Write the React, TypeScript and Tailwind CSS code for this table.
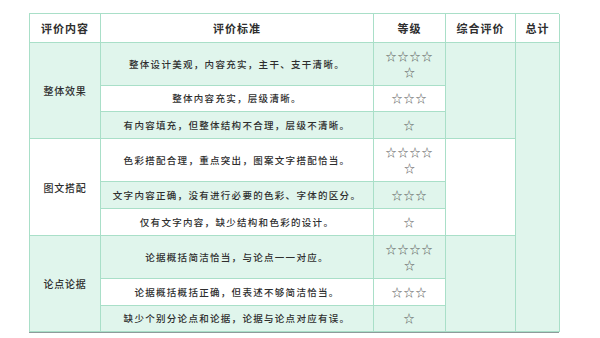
import React from "react";

const font = { fontFamily: '"Noto Sans CJK SC", "Noto Sans", sans-serif' };

type Row = { text: string; stars: number; green: boolean };
type Group = { name: string; green: boolean; rows: Row[] };

const groups: Group[] = [
  {
    name: "整体效果",
    green: true,
    rows: [
      { text: "整体设计美观，内容充实，主干、支干清晰。", stars: 5, green: true },
      { text: "整体内容充实，层级清晰。", stars: 3, green: false },
      { text: "有内容填充，但整体结构不合理，层级不清晰。", stars: 1, green: true },
    ],
  },
  {
    name: "图文搭配",
    green: false,
    rows: [
      { text: "色彩搭配合理，重点突出，图案文字搭配恰当。", stars: 5, green: false },
      { text: "文字内容正确，没有进行必要的色彩、字体的区分。", stars: 3, green: true },
      { text: "仅有文字内容，缺少结构和色彩的设计。", stars: 1, green: false },
    ],
  },
  {
    name: "论点论据",
    green: true,
    rows: [
      { text: "论据概括简洁恰当，与论点一一对应。", stars: 5, green: true },
      { text: "论据概括概括正确，但表述不够简洁恰当。", stars: 3, green: false },
      { text: "缺少个别分论点和论据，论据与论点对应有误。", stars: 1, green: true },
    ],
  },
];

function Stars({ n }: { n: number }) {
  if (n === 5) {
    return (
      <div className="flex flex-col items-center leading-[16px]">
        <span className="tracking-[1px]">☆☆☆☆</span>
        <span>☆</span>
      </div>
    );
  }
  return <span className="tracking-[1px]">{"☆".repeat(n)}</span>;
}

const cell = "border-r border-b border-[#a9dfc8] flex items-center justify-center text-center";

export default function App() {
  return (
    <div className="w-[600px] h-[338px] bg-white pt-[13px] pl-[29px]" style={font}>
      <div className="w-[530px] border-b border-[#8e9b9b]">
        <div className="grid grid-cols-[71px_273px_72px_70px_44px] grid-rows-[29px_43px_26px_27px_43px_27px_27px_43px_27px_26px] border-l border-t border-[#a9dfc8] text-[#2e2e2e]">
          <div className={`${cell} bg-white text-[11px] font-bold tracking-[1px]`}>评价内容</div>
          <div className={`${cell} bg-white text-[11px] font-bold tracking-[1px]`}>评价标准</div>
          <div className={`${cell} bg-white text-[11px] font-bold tracking-[1px]`}>等级</div>
          <div className={`${cell} bg-white text-[11px] font-bold tracking-[1px]`}>综合评价</div>
          <div className={`${cell} bg-white text-[11px] font-bold tracking-[1px]`}>总计</div>
          {groups.map((g, gi) => (
            <React.Fragment key={g.name}>
              <div className={`${cell} row-span-3 text-[10px] font-medium tracking-[0.8px] ${g.green ? "bg-[#e0f5ec]" : "bg-white"}`}>
                {g.name}
              </div>
              {g.rows.map((r, ri) => (
                <React.Fragment key={ri}>
                  <div className={`${cell} text-[9.5px] font-medium tracking-[1.3px] ${r.green ? "bg-[#e0f5ec]" : "bg-white"}`}>
                    {r.text}
                  </div>
                  <div className={`${cell} text-[11px] text-[#555] ${r.green ? "bg-[#e0f5ec]" : "bg-white"}`}>
                    <Stars n={r.stars} />
                  </div>
                  {ri === 0 && (
                    <div className={`${cell} row-span-3 ${g.green ? "bg-[#e0f5ec]" : "bg-white"}`} />
                  )}
                  {ri === 0 && gi === 0 && <div className={`${cell} row-span-9 bg-[#e0f5ec]`} />}
                </React.Fragment>
              ))}
            </React.Fragment>
          ))}
        </div>
      </div>
    </div>
  );
}
